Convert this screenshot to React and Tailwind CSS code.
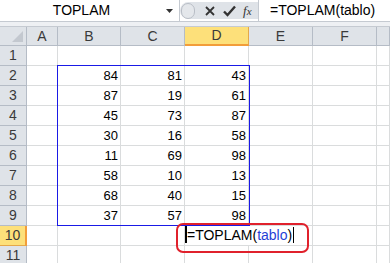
const cols = ["A", "B", "C", "D", "E", "F", ""];
const widths = ["w-[31px]", "w-[63px]", "w-[64px]", "w-[64px]", "w-[64px]", "w-[64px]", "w-[13px]"];

const data = {
  2: [84, 81, 43],
  3: [87, 19, 61],
  4: [45, 73, 87],
  5: [30, 16, 58],
  6: [11, 69, 98],
  7: [58, 10, 13],
  8: [68, 40, 15],
  9: [37, 57, 98],
};

const rows = [1, 2, 3, 4, 5, 6, 7, 8, 9, 10, 11];

function FormulaBar() {
  return (
    <div className="flex h-[22px] border-b border-[#c5cad1] bg-white">
      <div className="relative flex w-[180px] items-center justify-center border-r border-[#c5cad1] pr-[16px]">
        <span className="text-[14px] text-black">TOPLAM</span>
        <svg className="absolute right-[6px] top-[9px]" width="7" height="4" viewBox="0 0 7 4">
          <path d="M0 0h7L3.5 4z" fill="#333" />
        </svg>
      </div>
      <div className="flex w-[78px] items-center bg-[#dfe3e8] rounded-l-[10px] my-[2px] pl-[1px]">
        <div className="h-[16px] w-[14px] rounded-full bg-[#e4e7eb] border border-[#b9bec6]" />
        <svg className="ml-[10px]" width="10" height="10" viewBox="0 0 10 10">
          <path d="M1 1l8 8M9 1l-8 8" stroke="#333" strokeWidth="1.8" />
        </svg>
        <svg className="ml-[8px]" width="13" height="12" viewBox="0 0 13 12">
          <path d="M1 6.5l3.5 3.5L12 1.5" stroke="#333" strokeWidth="2.4" fill="none" />
        </svg>
        <span className="ml-[7px] text-[13px] italic text-[#333] font-['Liberation_Serif',serif]">f<span className="text-[11px]">x</span></span>
      </div>
      <div className="flex flex-1 items-center border-l border-[#c5cad1] pl-[11px]">
        <span className="text-[14px] text-black">=TOPLAM(tablo)</span>
      </div>
    </div>
  );
}

export default function App() {
  return (
    <div className="h-[263px] w-[390px] overflow-hidden bg-white font-['Liberation_Sans',Arial,sans-serif]">
      <FormulaBar />
      <div className="h-[5px] bg-[#eef0f3] border-b border-[#c5cad1]" />
      <div className="relative">
        <div className="flex h-[19px]">
          <div className="relative w-[27px] border-r border-b border-[#b5bcc6] bg-[#dfe3e8]">
            <svg className="absolute bottom-[3px] right-[3px]" width="11" height="11" viewBox="0 0 11 11">
              <path d="M11 0V11H0z" fill="#c3c8cf" />
            </svg>
          </div>
          {cols.map((c, i) =>
            c === "D" ? (
              <div key={i} className={`${widths[i]} flex items-center justify-center border-r border-b-2 border-r-[#e4a84a] border-b-[#f29d3a] bg-[#fde07a] text-[14px] text-[#3a3a3a]`}>
                {c}
              </div>
            ) : (
              <div key={i} className={`${widths[i]} flex items-center justify-center border-r border-b border-[#b5bcc6] bg-[#dfe3e8] text-[14px] text-[#3a3a3a]`}>
                {c}
              </div>
            )
          )}
        </div>
        {rows.map((r) => (
          <div key={r} className="flex h-[20px]">
            {r === 10 ? (
              <div className="flex w-[27px] items-center justify-center border-r-2 border-b border-r-[#f29d3a] border-b-[#e4a84a] bg-[#fde07a] text-[14px] text-[#3a3a3a]">
                {r}
              </div>
            ) : (
              <div className="flex w-[27px] items-center justify-center border-r border-b border-[#b5bcc6] bg-[#dfe3e8] text-[14px] text-[#3a3a3a]">
                {r}
              </div>
            )}
            {cols.map((c, i) => (
              <div key={i} className={`${widths[i]} flex items-center justify-end border-r border-b border-[#dadcdd] pr-[2px] text-[13px] text-black`}>
                {data[r] && i >= 1 && i <= 3 ? data[r][i - 1] : ""}
              </div>
            ))}
          </div>
        ))}

        <div className="pointer-events-none absolute left-[57px] top-[38px] h-[161px] w-[193px] border border-[#1a1ae6]" />

        <div className="absolute left-[185px] top-[199px] h-[17px] w-[64px] border-l-2 border-b-2 border-black bg-white" />
        <div className="absolute left-[247px] top-[213px] h-[5px] w-[5px] bg-black border border-white" />
        <div className="absolute left-[187px] top-[199px] flex h-[18px] items-center bg-white text-[14px] text-black">
          <span>=TOPLAM(</span>
          <span className="text-[#1f3fd6]">tablo</span>
          <span>)</span>
          <span className="ml-[1px] h-[16px] w-[1px] bg-black" />
        </div>
        <div className="pointer-events-none absolute left-[176px] top-[196px] h-[30px] w-[133px] rounded-[7px] border-2 border-[#e0212c]" />
      </div>
    </div>
  );
}
